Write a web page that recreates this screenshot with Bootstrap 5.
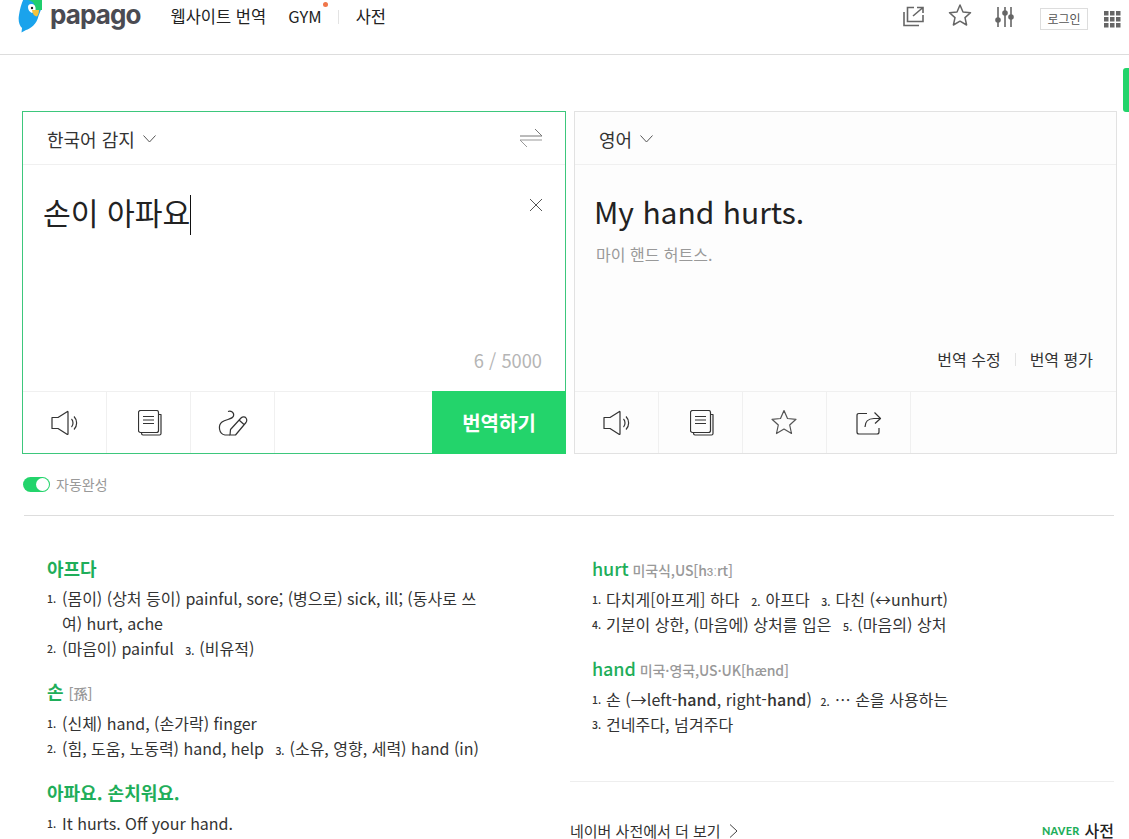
<!DOCTYPE html>
<html lang="ko">
<head>
<meta charset="utf-8">
<title>Papago</title>
<link href="https://cdn.jsdelivr.net/npm/bootstrap@5.3.0/dist/css/bootstrap.min.css" rel="stylesheet">
<style>
html,body{height:839px;overflow:hidden}
body{font-family:"Noto Sans CJK KR","Liberation Sans",sans-serif;color:#222;background:#fff;position:relative}
svg{display:block;fill:none}
.topbar{height:55px;border-bottom:1px solid #ddd;padding-left:18px;padding-right:8px}
.brand-word{font-family:"Inter",sans-serif;font-weight:700;font-size:26px;line-height:28px;color:#4b4b52;letter-spacing:-.9px;margin-left:8px;margin-top:-25px}
.logo-wrap{margin-top:-22px}
.menu-txt{font-size:16.5px;color:#222;line-height:20px;margin-top:-22px}
.gnb-gym{position:relative;margin-left:22px}
.gym-dot{position:absolute;top:-4px;right:-6px;width:5px;height:5px;border-radius:50%;background:#f0764a}
.gnb-sep{width:1px;height:14px;background:#e3e3e3;margin:-20px 17px 0 16px}
.first-menu{margin-left:30px}
.login-box{border:1px solid #ddd;font-size:12px;line-height:19px;width:48px;height:22px;text-align:center;color:#555;margin-top:-16px;margin-left:25px;margin-right:16px}
.ticon{margin-top:-21px}
.ticon-star{margin-top:-24px;margin-left:23px}
.ticon-gap{margin-left:23px}
.ticon-grid{margin-top:-15px}
.side-tab{position:absolute;right:0;top:68px;width:6px;height:44px;background:#23d46b;border-radius:3px 0 0 3px}
.panels{padding-top:56px;padding-left:22px;gap:8px;width:1117px}
.panel{height:343px;flex:0 0 auto;display:flex;flex-direction:column}
.panel-src{width:544px;border:1px solid #3dc77c;background:#fff}
.panel-dst{width:543px;border:1px solid #e2e2e2;background:#fdfdfd}
.panel-head{height:53px;border-bottom:1px solid #f0f0f0;flex:none;padding-top:2px}
.lang-txt{font-size:18px;color:#333;line-height:28px;margin-left:24px}
.swap-ico{margin-right:22px;margin-top:-2px}
.panel-body{flex:1;position:relative;min-height:0}
.src-text{font-size:30.2px;line-height:44px;color:#222;padding:25px 0 0 20px;position:relative}
.caret-bar{display:inline-block;width:1px;height:40px;background:#111;vertical-align:-10px}
.dst-text{font-size:30px;line-height:44px;color:#222;padding:24px 0 0 19px}
.pron{font-size:16px;color:#999;padding-left:21px;line-height:22px;margin-top:10px}
.clear-x{position:absolute;right:22px;top:33px}
.counter{position:absolute;right:23px;bottom:19px;font-size:18.3px;color:#b5b5b5;line-height:24px}
.edit-links{position:absolute;right:23px;bottom:22px;font-size:16px;line-height:20px;color:#333}
.edit-sep{width:1px;height:13px;background:#e3e3e3;margin:0 14px}
.tool-row{height:62px;border-top:1px solid #f0f0f0;flex:none}
.tool-cell{width:84px;border-right:1px solid #f0f0f0}
.nudge-book{margin-left:2px}
.nudge-star{margin:-2px 2px 0 0}
.go-btn{margin-left:auto;width:134px;margin-right:-1px;margin-top:-1px;margin-bottom:-1px;background:#23d46b;color:#fff;font-size:20px;font-weight:700;border-radius:0;border:0}
.go-btn:hover{background:#23d46b;color:#fff}
.auto-row{padding-left:23px;margin-top:20px;height:20px}
.mini-switch{width:27px;height:15px;border-radius:8px;background:#23d46b;position:relative}
.mini-knob{position:absolute;right:1px;top:1px;width:13px;height:13px;border-radius:50%;background:#fff}
.auto-txt{font-size:14px;color:#999;margin-left:6px;line-height:20px}
.rule-main{border-top:1px solid #ddd;margin:21px 15px 0 24px}
.dict-area{padding-top:39px;width:1114px}
.dict-left{width:548px;padding-left:47px;padding-right:63px;flex:none}
.dict-right{width:544px;margin-left:22px;flex:none}
.dict-right-in{padding-left:22px}
.word-h{font-size:18px;font-weight:700;color:#1fae5a;line-height:26px;height:26px;margin:0}
.word-en{font-size:18px;font-weight:500;letter-spacing:-.1px}
.word-sub{font-size:14px;font-weight:500;color:#999;margin-left:-1px;letter-spacing:-.1px}
.word-sub-han{margin-left:0}
.mean-line{font-size:16px;line-height:25px;color:#333;margin:0;padding-left:15px;position:relative}
.dict-right .mean-line{padding-left:14px;height:25px;letter-spacing:.05px}
.hw-strong{font-weight:500}
.numb{font-size:10.5px;color:#333;font-weight:500;margin-right:5px}
.numb-abs{position:absolute;left:0;top:0}
.mgap{margin-left:7px}
.mgap-tight{margin-left:4px}
.word-block{margin-bottom:15px}
.word-block .word-h{margin-bottom:5px}
.block-son{margin-bottom:16px}
.block-son .word-h{margin-bottom:7px}
.block-last .word-h{margin-bottom:6px}
.block-last{margin-bottom:0}
.dict-right .word-block{margin-bottom:18px}
.dict-right .word-block .word-h{margin-bottom:6px}
.rule-sub{border-top:1px solid #eee;margin-top:44px}
.more-row{margin-top:40px;font-size:15px;line-height:16px;color:#333}
.naver-w{font-family:"Lato",sans-serif;font-weight:900;font-size:10.8px;color:#1fae5a;letter-spacing:.3px;margin-right:5px}
.dic-w{font-size:16px;font-weight:500;color:#222;margin-bottom:1px}
</style>
</head>
<body>
<header class="topbar d-flex align-items-center">
  <div class="logo-wrap">
    <svg width="24" height="36" viewBox="0 0 24 36">
      <path d="M6 0H24V7C24 9 23 12 20.5 18C19 26 12 31 8 32L3.5 34.5L4 30C1 27 0 22 1 17C2 10 4 4 6 0Z" fill="#1aa3ec"/>
      <path d="M10 0H24V12H17C18 7 15 3 10 2Z" fill="#1fce6d"/>
      <path d="M10 9C10 6.5 12 5.5 14 6C17 6.5 18 9 17.5 12.5L14 15C11.5 14 10 12 10 9Z" fill="#fff"/>
      <path d="M14 12H21C21 15 20 18 18.5 18.5C16 18 14.5 15.5 14 12Z" fill="#f5c33b"/>
      <circle cx="14" cy="10" r="1.2" fill="#222"/>
    </svg>
  </div>
  <div class="brand-word">papago</div>
  <div class="menu-txt first-menu">웹사이트 번역</div>
  <div class="menu-txt gnb-gym">GYM<span class="gym-dot"></span></div>
  <div class="gnb-sep"></div>
  <div class="menu-txt">사전</div>
  <div class="ms-auto d-flex align-items-center">
    <svg class="ticon" width="22" height="22" viewBox="0 0 22 22" stroke="#666" stroke-width="1.6"><path d="M1 6V19.5H16"/><path d="M11 1.5H4.5V15.5H20V9"/><path d="M10 10L20 1.5M14 1.5H20V7"/></svg>
    <svg class="ticon-star" width="24" height="24" viewBox="0 0 24 24" stroke="#666" stroke-width="1.5" stroke-linejoin="round"><path d="M12 2L15 9L22.5 9.7L17 14.6L18.6 22L12 18.2L5.4 22L7 14.6L1.5 9.7L9 9Z"/></svg>
    <svg class="ticon ticon-gap" width="20" height="22" viewBox="0 0 20 22" stroke="#666" stroke-width="1.6"><path d="M3 1V21M10 1V21M16 1V21"/><circle cx="3" cy="14" r="2" fill="#666"/><circle cx="10" cy="7" r="2" fill="#666"/><circle cx="16" cy="11" r="2" fill="#666"/></svg>
    <div class="login-box">로그인</div>
    <svg class="ticon-grid" width="17" height="17" viewBox="0 0 17 17"><g fill="#666"><rect width="4.5" height="4.5"/><rect x="6" width="4.5" height="4.5"/><rect x="12" width="4.5" height="4.5"/><rect y="6" width="4.5" height="4.5"/><rect x="6" y="6" width="4.5" height="4.5"/><rect x="12" y="6" width="4.5" height="4.5"/><rect y="12" width="4.5" height="4.5"/><rect x="6" y="12" width="4.5" height="4.5"/><rect x="12" y="12" width="4.5" height="4.5"/></g></svg>
  </div>
</header>
<div class="side-tab"></div>

<main>
  <section class="panels d-flex">
    <div class="panel panel-src">
      <div class="panel-head d-flex align-items-center">
        <span class="lang-txt">한국어 감지</span>
        <svg class="ms-2" width="13" height="8" viewBox="0 0 13 8" stroke="#555"><path d="M.5 .5L6.5 7L12.5 .5"/></svg>
        <svg class="ms-auto swap-ico" width="24" height="20" viewBox="0 0 24 20" stroke="#777"><path d="M1 8H23L16 1"/><path d="M23 12H1L8 19" stroke="#999"/></svg>
      </div>
      <div class="panel-body">
        <div class="src-text">손이 아파요<span class="caret-bar"></span></div>
        <svg class="clear-x" width="14" height="14" viewBox="0 0 14 14" stroke="#555"><path d="M1 1L13 13M13 1L1 13"/></svg>
        <div class="counter">6 / 5000</div>
      </div>
      <div class="tool-row d-flex">
        <div class="tool-cell d-flex align-items-center justify-content-center">
          <svg width="28" height="26" viewBox="0 0 28 26" stroke="#333" stroke-width="1.2" stroke-linejoin="round"><path d="M1 7.5H7L16.5 1.5C17 1.3 17 2 17 2V24C17 24.6 16.5 24.6 16 24.2L7 18.5H1Z"/><path d="M20.5 9C22.5 11 22.5 15 20.5 17"/><path d="M23 6.5C26.5 10 26.5 16 23 19.5"/></svg>
        </div>
        <div class="tool-cell d-flex align-items-center justify-content-center">
          <svg class="nudge-book" width="24" height="26" viewBox="0 0 24 26" stroke="#333" stroke-width="1.2" stroke-linejoin="round"><rect x=".5" y=".5" width="20" height="22" rx="2"/><path d="M21 4.5H23V23.5C23 24.5 22.5 25 21.5 25H5C4 25 3.5 24.5 3.5 23"/><path d="M5 6.5H16M5 10H16M5 13.5H16"/></svg>
        </div>
        <div class="tool-cell d-flex align-items-center justify-content-center">
          <svg width="30" height="26" viewBox="0 0 30 26" stroke="#333" stroke-width="1.2" stroke-linejoin="round"><path d="M10 1.5C13 .5 16.5 2.5 15.5 6C14.5 9.5 8 9 4 12C0 15 .5 24 7 25H12"/><path d="M12 25L12.5 19.5L23 8C24.5 6.5 27 6.5 28 8C29 9.5 29 11 28 12.5L17.5 25Z"/><path d="M21 10L26 14.5"/></svg>
        </div>
        <button type="button" class="btn go-btn">번역하기</button>
      </div>
    </div>
    <div class="panel panel-dst">
      <div class="panel-head d-flex align-items-center">
        <span class="lang-txt">영어</span>
        <svg class="ms-2" width="13" height="8" viewBox="0 0 13 8" stroke="#555"><path d="M.5 .5L6.5 7L12.5 .5"/></svg>
      </div>
      <div class="panel-body">
        <div class="dst-text">My hand hurts.</div>
        <div class="pron">마이 핸드 허트스.</div>
        <div class="edit-links d-flex align-items-center">번역 수정<span class="edit-sep"></span>번역 평가</div>
      </div>
      <div class="tool-row d-flex">
        <div class="tool-cell d-flex align-items-center justify-content-center">
          <svg width="28" height="26" viewBox="0 0 28 26" stroke="#333" stroke-width="1.2" stroke-linejoin="round"><path d="M1 7.5H7L16.5 1.5C17 1.3 17 2 17 2V24C17 24.6 16.5 24.6 16 24.2L7 18.5H1Z"/><path d="M20.5 9C22.5 11 22.5 15 20.5 17"/><path d="M23 6.5C26.5 10 26.5 16 23 19.5"/></svg>
        </div>
        <div class="tool-cell d-flex align-items-center justify-content-center">
          <svg class="nudge-book" width="24" height="26" viewBox="0 0 24 26" stroke="#333" stroke-width="1.2" stroke-linejoin="round"><rect x=".5" y=".5" width="20" height="22" rx="2"/><path d="M21 4.5H23V23.5C23 24.5 22.5 25 21.5 25H5C4 25 3.5 24.5 3.5 23"/><path d="M5 6.5H16M5 10H16M5 13.5H16"/></svg>
        </div>
        <div class="tool-cell d-flex align-items-center justify-content-center">
          <svg class="nudge-star" width="28" height="26" viewBox="0 0 28 26" stroke="#555" stroke-width="1.2" stroke-linejoin="round"><path d="M14 1.5L17.5 9.5L26 10.3L19.7 16L21.5 24.5L14 20L6.5 24.5L8.3 16L2 10.3L10.5 9.5Z"/></svg>
        </div>
        <div class="tool-cell d-flex align-items-center justify-content-center">
          <svg width="26" height="24" viewBox="0 0 26 24" stroke="#333" stroke-width="1.2" stroke-linejoin="round"><path d="M11 2.5H3C1.5 2.5 1 3 1 4.5V21C1 22.5 1.5 23 3 23H21C22.5 23 23 22.5 23 21V17"/><path d="M9 16C9 11 12 7.5 18 7.5H24"/><path d="M18.5 1.5L24.5 7.5L19 12.5"/></svg>
        </div>
      </div>
    </div>
  </section>

  <div class="auto-row d-flex align-items-center">
    <div class="mini-switch"><span class="mini-knob"></span></div>
    <span class="auto-txt">자동완성</span>
  </div>
  <div class="rule-main"></div>

  <section class="dict-area d-flex">
    <div class="dict-left">
      <div class="word-block">
        <h2 class="word-h">아프다</h2>
        <p class="mean-line"><span class="numb numb-abs">1.</span>(몸이) (상처 등이) painful, sore; (병으로) sick, ill; (동사로 쓰여) hurt, ache</p>
        <p class="mean-line"><span class="numb numb-abs">2.</span>(마음이) painful <span class="numb mgap">3.</span>(비유적)</p>
      </div>
      <div class="word-block block-son">
        <h2 class="word-h">손 <span class="word-sub word-sub-han">[孫]</span></h2>
        <p class="mean-line"><span class="numb numb-abs">1.</span>(신체) hand, (손가락) finger</p>
        <p class="mean-line"><span class="numb numb-abs">2.</span>(힘, 도움, 노동력) hand, help <span class="numb mgap">3.</span>(소유, 영향, 세력) hand (in)</p>
      </div>
      <div class="word-block block-last">
        <h2 class="word-h">아파요. 손치워요.</h2>
        <p class="mean-line"><span class="numb numb-abs">1.</span>It hurts. Off your hand.</p>
      </div>
    </div>
    <div class="dict-right">
      <div class="dict-right-in">
        <div class="word-block">
          <h2 class="word-h"><span class="word-en">hurt</span> <span class="word-sub">미국식,US[hɜːrt]</span></h2>
          <p class="mean-line"><span class="numb numb-abs">1.</span>다치게[아프게] 하다 <span class="numb mgap">2.</span>아프다 <span class="numb mgap">3.</span>다친 (↔unhurt)</p>
          <p class="mean-line"><span class="numb numb-abs">4.</span>기분이 상한, (마음에) 상처를 입은 <span class="numb mgap">5.</span>(마음의) 상처</p>
        </div>
        <div class="word-block">
          <h2 class="word-h"><span class="word-en">hand</span> <span class="word-sub">미국·영국,US·UK[hænd]</span></h2>
          <p class="mean-line"><span class="numb numb-abs">1.</span>손 (→left-<b class="hw-strong">hand</b>, right-<b class="hw-strong">hand</b>) <span class="numb mgap-tight">2.</span>⋯ 손을 사용하는</p>
          <p class="mean-line"><span class="numb numb-abs">3.</span>건네주다, 넘겨주다</p>
        </div>
      </div>
      <div class="rule-sub"></div>
      <div class="more-row d-flex align-items-center">
        <span>네이버 사전에서 더 보기</span>
        <svg class="ms-2" width="9" height="14" viewBox="0 0 9 14" stroke="#444"><path d="M1 .5L8 7L1 13.5"/></svg>
        <span class="ms-auto d-flex align-items-center"><span class="naver-w">NAVER</span><span class="dic-w">사전</span></span>
      </div>
    </div>
  </section>
</main>
</body>
</html>
